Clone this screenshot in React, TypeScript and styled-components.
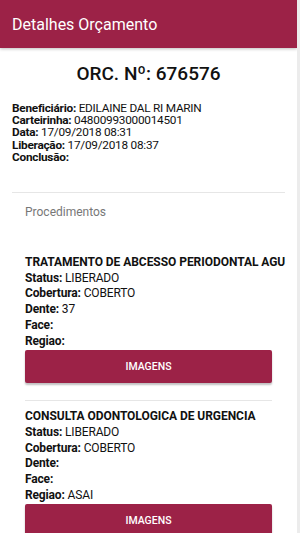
import styled, { createGlobalStyle } from 'styled-components';

const PRIMARY = '#9c2247';

const GlobalStyle = createGlobalStyle`
  html, body {
    margin: 0;
    padding: 0;
    background: #ffffff;
    font-family: Roboto, 'Noto Sans', sans-serif;
    overflow: hidden;
  }
`;

const Screen = styled.div`
  width: 297px;
  height: 533px;
  border-right: 3px solid #ececec;
  overflow: hidden;
  color: #111;
`;

const Header = styled.header`
  height: 48px;
  background: ${PRIMARY};
  display: flex;
  align-items: center;
  padding: 0 12px;
  box-shadow: 0 1px 3px rgba(0, 0, 0, 0.25);
  color: #fff;
  font-size: 16px;
  position: relative;
`;

const Title = styled.h1`
  margin: 14px 0 0;
  text-align: center;
  font-size: 19px;
  font-weight: 500;
  line-height: 24px;
`;

const Details = styled.div`
  padding: 16px 12px 29px;
  font-size: 11.8px;
  line-height: 12.2px;
  letter-spacing: -0.25px;
`;

const Label = styled.b`
  font-weight: 700;
`;

const Divider = styled.hr<{ $inset: number }>`
  border: none;
  border-top: 1px solid #e6e6e6;
  margin: 0 ${(p) => p.$inset}px;
`;

const Section = styled.div`
  padding: 0 25px;
`;

const SectionTitle = styled.div`
  color: #777;
  font-size: 12px;
  line-height: 14px;
  margin: 12px 0 28px;
`;

const Procedure = styled.div`
  padding-top: 8px;
  font-size: 12px;
  line-height: 15.7px;
  letter-spacing: -0.15px;
`;

const ProcName = styled.div`
  font-weight: 700;
  white-space: nowrap;
  letter-spacing: -0.05px;
`;

const Button = styled.button`
  display: block;
  width: 247px;
  height: 33px;
  margin: 1px 0 17px;
  border: none;
  border-radius: 2px;
  background: ${PRIMARY};
  color: #fff;
  font-family: Roboto, 'Noto Sans', sans-serif;
  font-size: 10.5px;
  font-weight: 500;
  box-shadow: 0 2px 2px rgba(0, 0, 0, 0.25);
`;

const procedures = [
  { name: 'TRATAMENTO DE ABCESSO PERIODONTAL AGU', status: 'LIBERADO', cobertura: 'COBERTO', dente: '37', face: '', regiao: '' },
  { name: 'CONSULTA ODONTOLOGICA DE URGENCIA', status: 'LIBERADO', cobertura: 'COBERTO', dente: '', face: '', regiao: 'ASAI' },
];

const App = () => (
  <Screen>
    <GlobalStyle />
    <Header>Detalhes Orçamento</Header>
    <Title>ORC. Nº: 676576</Title>
    <Details>
      <div><Label>Beneficiário:</Label> EDILAINE DAL RI MARIN</div>
      <div><Label>Carteirinha:</Label> 04800993000014501</div>
      <div><Label>Data:</Label> 17/09/2018 08:31</div>
      <div><Label>Liberação:</Label> 17/09/2018 08:37</div>
      <div><Label>Conclusão:</Label></div>
    </Details>
    <Divider $inset={12} />
    <Section>
      <SectionTitle>Procedimentos</SectionTitle>
      {procedures.map((p, i) => (
        <div key={p.name}>
          {i > 0 && <Divider $inset={0} />}
          <Procedure>
            <ProcName>{p.name}</ProcName>
            <div><Label>Status:</Label> {p.status}</div>
            <div><Label>Cobertura:</Label> {p.cobertura}</div>
            <div><Label>Dente:</Label> {p.dente}</div>
            <div><Label>Face:</Label> {p.face}</div>
            <div><Label>Regiao:</Label> {p.regiao}</div>
          </Procedure>
          <Button>IMAGENS</Button>
        </div>
      ))}
    </Section>
  </Screen>
);

export default App;
